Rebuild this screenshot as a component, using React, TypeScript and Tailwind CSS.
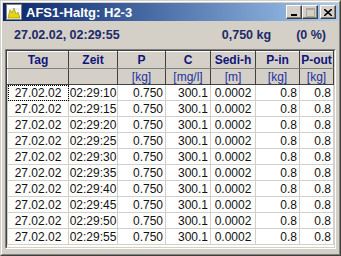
import React from "react";

const cols = [
  { name: "Tag", unit: "", w: 61 },
  { name: "Zeit", unit: "", w: 49 },
  { name: "P", unit: "[kg]", w: 48 },
  { name: "C", unit: "[mg/l]", w: 45 },
  { name: "Sedi-h", unit: "[m]", w: 45 },
  { name: "P-in", unit: "[kg]", w: 44 },
  { name: "P-out", unit: "[kg]", w: 34 },
];

const times = ["10", "15", "20", "25", "30", "35", "40", "45", "50", "55"];

function TitleIcon() {
  return (
    <svg width="16" height="16" viewBox="0 0 16 16">
      <rect x="0" y="0" width="16" height="16" fill="#ffffff" />
      <rect x="0.5" y="0.5" width="15" height="15" fill="none" stroke="#808080" />
      <path d="M2 14 L4 6 L6 9 L8 4 L10 10 L12 8 L14 14 Z" fill="#e8d800" stroke="#808000" strokeWidth="0.6" />
      <path d="M2 5 H14 M2 9 H14" stroke="#c0c0c0" strokeWidth="0.5" />
    </svg>
  );
}

function CaptionButton({ children, disabled }: { children: React.ReactNode; disabled?: boolean }) {
  return (
    <div className="w-[16px] h-[14px] bg-[#d4d0c8] border-t border-l border-t-white border-l-white border-r border-b border-r-[#404040] border-b-[#404040] shadow-[inset_-1px_-1px_0_#808080] flex items-center justify-center">
      <span className={disabled ? "opacity-50" : ""}>{children}</span>
    </div>
  );
}

export default function App() {
  return (
    <div
      className="w-[341px] h-[256px] bg-[#d4d0c8] border border-t-[#d4d0c8] border-l-[#d4d0c8] border-r-[#404040] border-b-[#404040] flex flex-col overflow-hidden"
      style={{ fontFamily: '"Liberation Sans", Arial, sans-serif' }}
    >
      <div className="flex-1 flex flex-col border border-t-white border-l-white border-r-[#808080] border-b-[#808080] p-[1px]">
        {/* title bar */}
        <div className="h-[18px] flex items-center bg-gradient-to-r from-[#0a246a] to-[#a6caf0] pl-[3px] pr-[2px]">
          <TitleIcon />
          <span className="ml-[4px] text-white font-bold text-[13px] leading-none">AFS1-Haltg: H2-3</span>
          <div className="ml-auto flex items-center">
            <CaptionButton>
              <svg width="8" height="8" viewBox="0 0 8 8">
                <rect x="1" y="6" width="6" height="2" fill="#000" />
              </svg>
            </CaptionButton>
            <CaptionButton disabled>
              <svg width="9" height="9" viewBox="0 0 9 9">
                <rect x="0.5" y="0.5" width="8" height="8" fill="none" stroke="#808080" />
                <rect x="0" y="1" width="9" height="1" fill="#808080" />
              </svg>
            </CaptionButton>
            <div className="ml-[2px]">
              <CaptionButton>
                <svg width="8" height="7" viewBox="0 0 8 7">
                  <path d="M0 0 L8 7 M8 0 L0 7" stroke="#000" strokeWidth="1.6" />
                </svg>
              </CaptionButton>
            </div>
          </div>
        </div>

        {/* status line */}
        <div className="h-[28px] flex items-center text-[#1c2a6a] font-bold text-[12.5px] pl-[11px] pr-[12px] pt-[1px]">
          <span>27.02.02, 02:29:55</span>
          <span className="ml-auto">0,750 kg</span>
          <span className="ml-[25px]">(0 %)</span>
        </div>

        {/* grid */}
        <div className="flex-1 mx-[2px] mb-[4px] border border-t-[#808080] border-l-[#808080] border-r-white border-b-white">
          <div className="h-full bg-white border border-t-[#404040] border-l-[#404040] border-r-[#d4d0c8] border-b-[#d4d0c8] overflow-hidden">
            <table className="border-collapse table-fixed text-[12px] leading-none">
              <colgroup>
                {cols.map((c) => (
                  <col key={c.name} style={{ width: c.w }} />
                ))}
              </colgroup>
              <thead>
                <tr className="h-[17px]">
                  {cols.map((c) => (
                    <th
                      key={c.name}
                      className="p-0 bg-[#d4d0c8] text-[#10157a] font-bold text-center border-t border-l border-t-white border-l-white border-r border-b border-r-[#404040] border-b-[#808080]"
                    >
                      {c.name}
                    </th>
                  ))}
                </tr>
                <tr className="h-[16px]">
                  {cols.map((c) => (
                    <th
                      key={c.name}
                      className="p-0 bg-[#d4d0c8] text-[#2233a0] font-normal text-center border-t border-l border-t-white border-l-white border-r border-b border-r-[#404040] border-b-[#404040]"
                    >
                      {c.unit}
                    </th>
                  ))}
                </tr>
              </thead>
              <tbody>
                {times.map((t, i) => (
                  <tr key={t} className="h-[16px] text-[#111]">
                    <td
                      className={
                        "p-0 text-center border border-[#d4d0c8]" +
                        (i === 0 ? " outline outline-1 outline-dotted outline-black -outline-offset-1" : "")
                      }
                    >
                      27.02.02
                    </td>
                    <td className="p-0 text-center border border-[#d4d0c8]">02:29:{t}</td>
                    <td className="p-0 pr-[2px] text-right border border-[#d4d0c8]">0.750</td>
                    <td className="p-0 pr-[2px] text-right border border-[#d4d0c8]">300.1</td>
                    <td className="p-0 text-center border border-[#d4d0c8]">0.0002</td>
                    <td className="p-0 pr-[2px] text-right border border-[#d4d0c8]">0.8</td>
                    <td className="p-0 pr-[2px] text-right border border-[#d4d0c8]">0.8</td>
                  </tr>
                ))}
              </tbody>
            </table>
          </div>
        </div>
      </div>
    </div>
  );
}
